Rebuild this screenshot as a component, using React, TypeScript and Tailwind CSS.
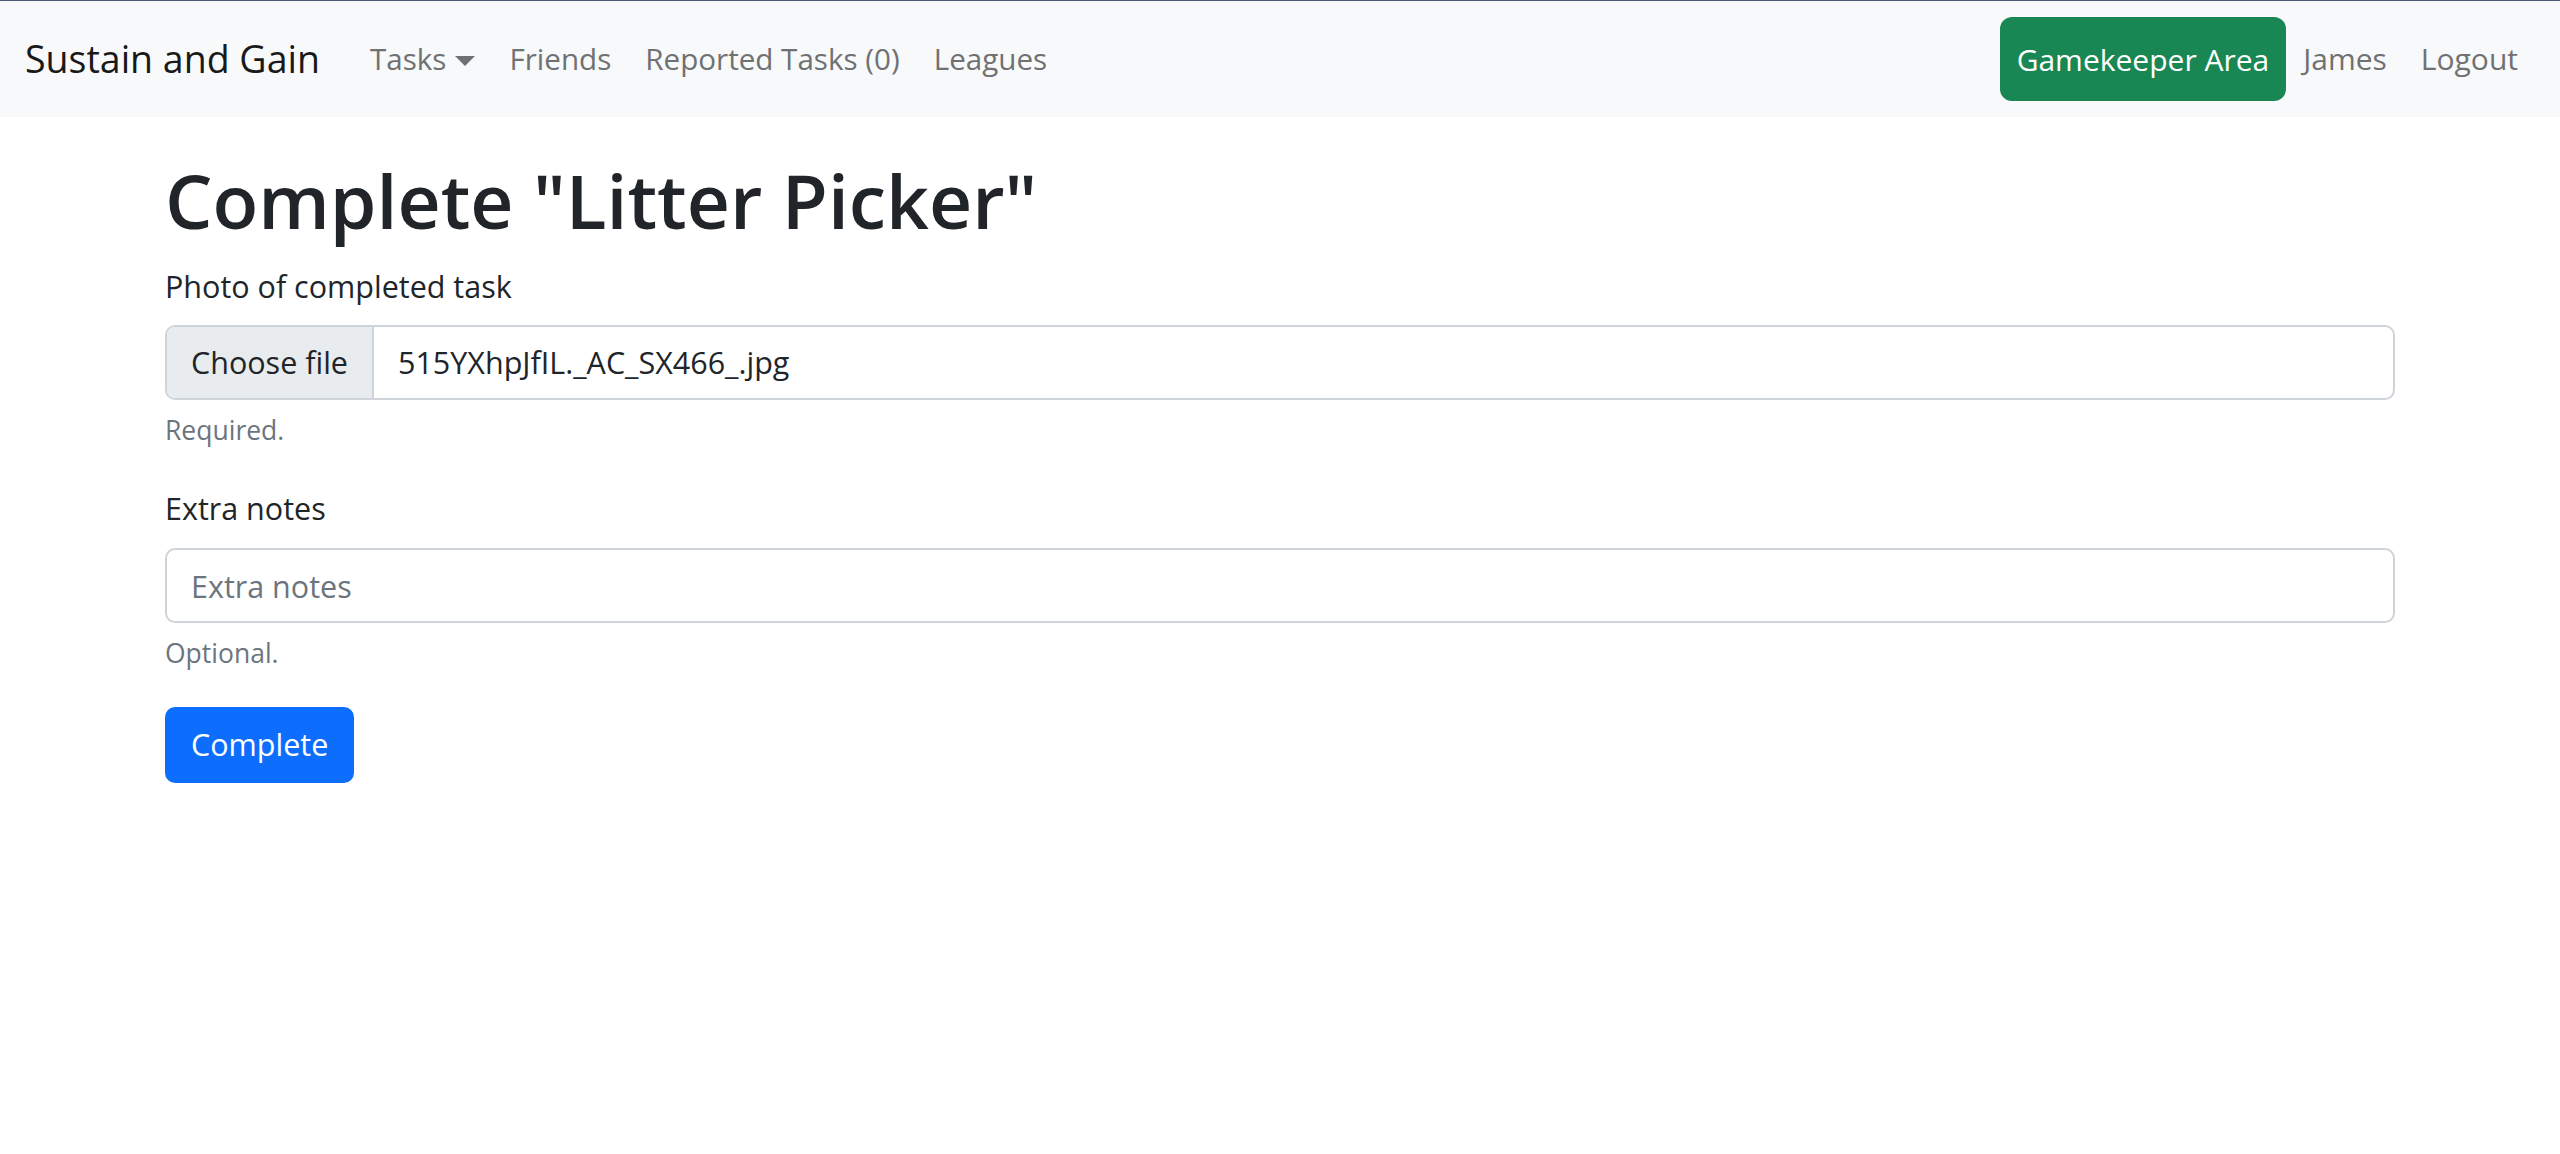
import React from "react";

const navLinks = ["Friends", "Reported Tasks (0)", "Leagues"];

const Navbar: React.FC = () => {
  return (
    <nav className="h-[117px] border-t border-[#4b5873] bg-[#f8f9fa] px-[25px] flex items-center justify-between">
      <div className="flex items-center">
        <span className="mr-[33px] text-[37.5px] leading-[60px] text-[#191919]">
          Sustain and Gain
        </span>
        <span className="px-[17px] text-[29.6px] leading-[50px] text-[#707172] flex items-center">
          Tasks
          <svg width="20" height="10" viewBox="0 0 20 10" className="ml-[9px] mt-[4px]">
            <polygon points="0,0 20,0 10,10" fill="#707172" />
          </svg>
        </span>
        {navLinks.map((link) => (
          <span
            key={link}
            className="px-[17px] text-[29.6px] leading-[50px] text-[#707172]"
          >
            {link}
          </span>
        ))}
      </div>

      {/* right side */}
      <div className="flex items-center">
        <span className="h-[84px] px-[17px] rounded-[12px] bg-[#198754] text-white text-[30px] flex items-center">
          Gamekeeper Area
        </span>
        <span className="px-[17px] text-[30px] leading-[50px] text-[#707172]">
          James
        </span>
        <span className="px-[17px] text-[30px] leading-[50px] text-[#707172]">
          Logout
        </span>
      </div>
    </nav>
  );
};

const App: React.FC = () => {
  return (
    <div className="min-h-[1154px] bg-white font-['Open_Sans','Noto_Sans',sans-serif] text-[#212529]">
      <Navbar />

      <main className="px-[165px]">
        <h1 className="mt-[33px] mb-[11px] text-[75px] leading-[100px] font-semibold">
          Complete "Litter Picker"
        </h1>

        {/* Photo upload */}
        <label className="block text-[30.5px] leading-[50px] mb-[14px]">
          Photo of completed task
        </label>
        <div className="h-[75px] flex border-2 border-[#ced4da] rounded-[10px] overflow-hidden">
          <div className="px-[24px] flex items-center bg-[#e9ecef] border-r-2 border-[#ced4da] text-[30.5px]">
            Choose file
          </div>
          <div className="pl-[24px] flex items-center text-[30.5px]">
            515YXhpJfIL._AC_SX466_.jpg
          </div>
        </div>
        <div className="mt-[10px] text-[26.5px] leading-[40px] text-[#6c757d]">
          Required.
        </div>

        {/* Notes */}
        <label className="block mt-[33px] text-[30.5px] leading-[50px] mb-[15px]">
          Extra notes
        </label>
        <input
          type="text"
          placeholder="Extra notes"
          className="block w-full h-[75px] px-[24px] border-2 border-[#ced4da] rounded-[10px] text-[30.5px] placeholder:text-[#6c757d] outline-none"
        />
        <div className="mt-[10px] text-[26.5px] leading-[40px] text-[#6c757d]">
          Optional.
        </div>

        <button className="mt-[34px] h-[76px] px-[26px] rounded-[10px] bg-[#0d6efd] text-white text-[30.5px]">
          Complete
        </button>
      </main>
    </div>
  );
};

export default App;
